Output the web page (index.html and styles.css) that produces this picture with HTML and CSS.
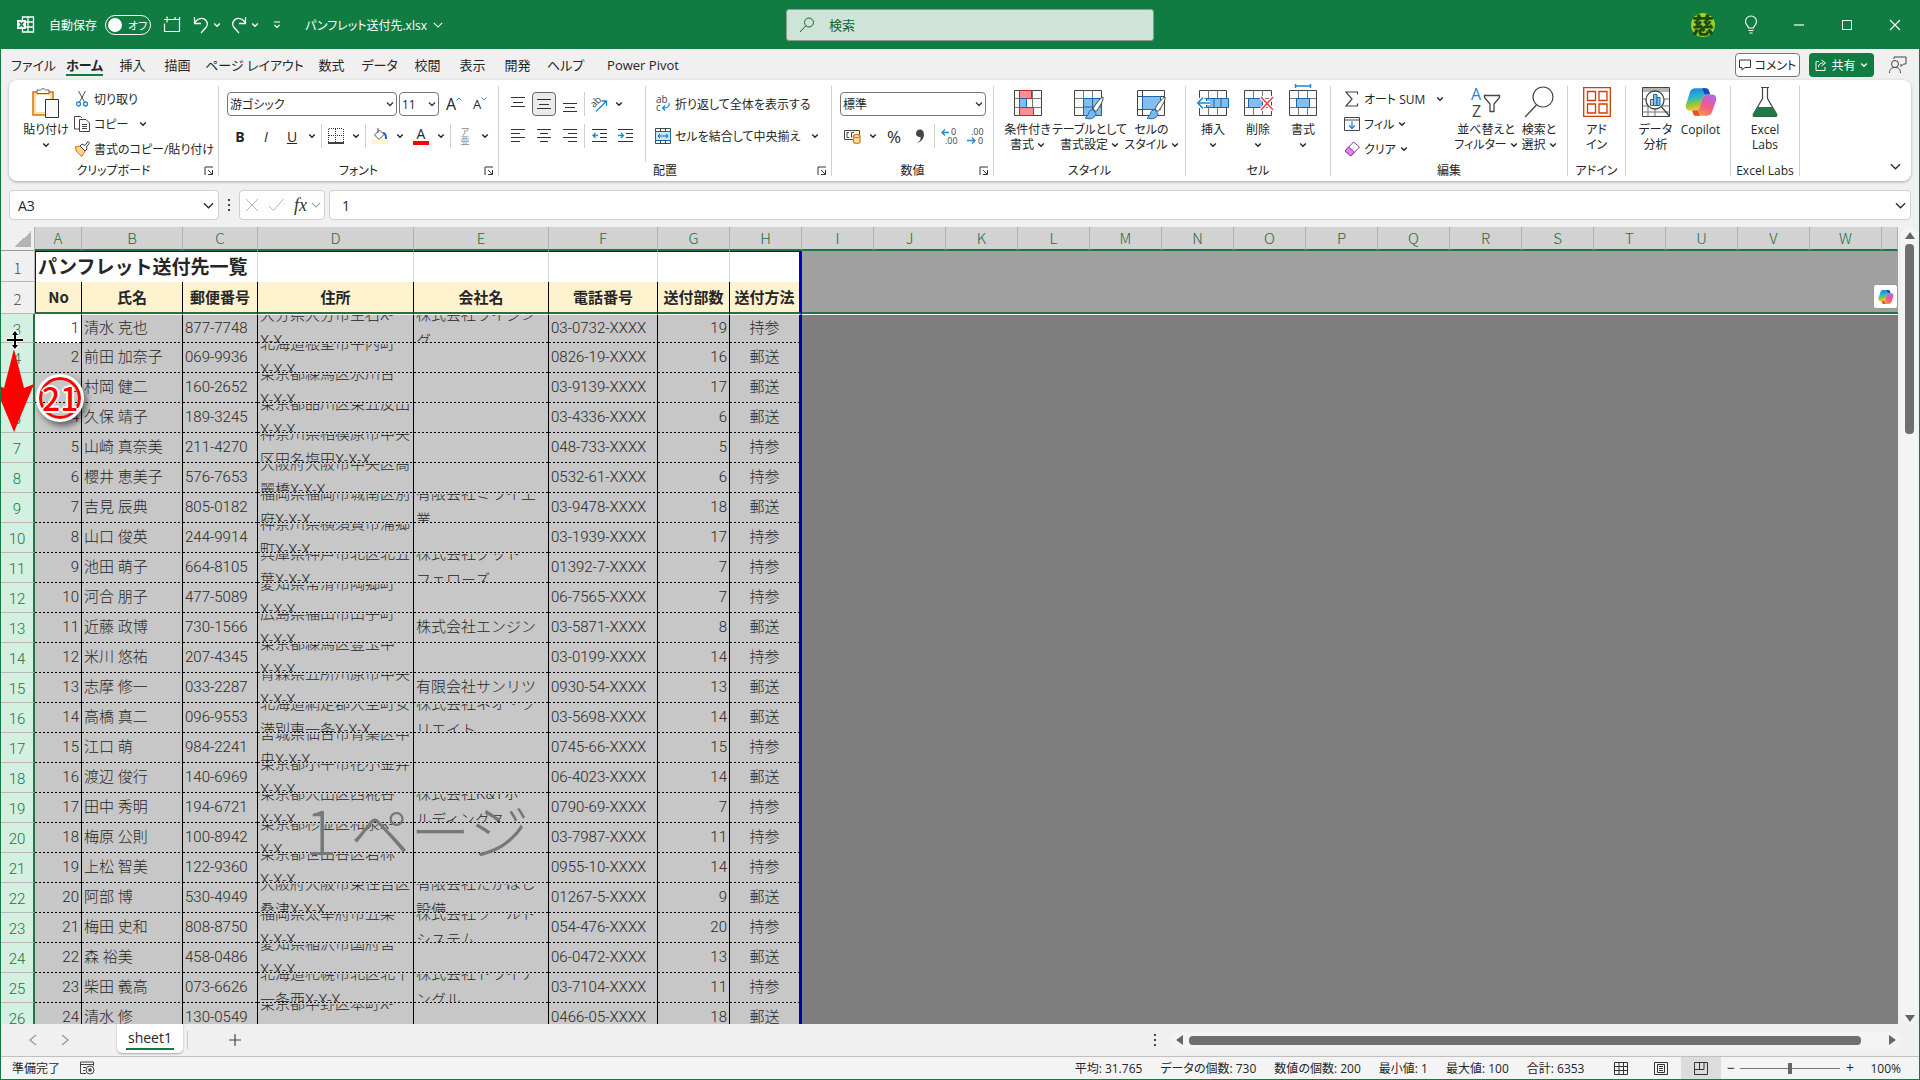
FILE: index.html
```html
<!DOCTYPE html>
<html lang="ja">
<head>
    <meta charset="UTF-8">
    <meta name="viewport" content="width=device-width, initial-scale=1.0">
    <title>パンフレット送付先.xlsx</title>
    <link rel="stylesheet" href="styles.css">
</head>
<body>
    <svg class="defs" width="0" height="0" aria-hidden="true">
        <defs>
            <linearGradient id="cpBlue" x1="0" y1="0" x2="0.2" y2="1"><stop offset="0" stop-color="#1b7fe0"/><stop offset="0.45" stop-color="#2bb5c8"/><stop offset="0.75" stop-color="#8fc93f"/><stop offset="1" stop-color="#f4c22b"/></linearGradient>
            <linearGradient id="cpPink" x1="0.8" y1="0" x2="0.3" y2="1"><stop offset="0" stop-color="#b06be8"/><stop offset="0.5" stop-color="#ee5a8c"/><stop offset="1" stop-color="#f79a3c"/></linearGradient>
        </defs>
        <symbol id="chev" viewBox="0 0 8 8"><path d="M1.2 2.5L4 5.3l2.800-2.800" fill="none" stroke="currentColor" stroke-width="1.4"/></symbol>
        <symbol id="chevBig" viewBox="0 0 12 12"><path d="M1 3.500l5 5 5-5" fill="none" stroke="currentColor" stroke-width="1.300"/></symbol>
        <symbol id="launch" viewBox="0 0 10 10"><path d="M1 9V1h8M4 4l4 4M8.500 4v4.500H4" fill="none" stroke="#333"/></symbol>
        <symbol id="copilot" viewBox="0 0 30 30">
            <path d="M10 2h9c2 0 3 1 3.600 3l.9 3h-3c-2 0-3 1-3.700 3l-3 9c-.7 2.200-2 3-4 3H5C1.500 23 0 20.500 1 17L4.500 6C5.500 3 7 2 10 2z" fill="url(#cpBlue)"/>
            <path d="M16 2h3c2 0 3 1 3.600 3l.9 3h-5z" fill="#1b48b8"/>
            <path d="M20 28h-9c-2 0-3-1-3.600-3l-.6-2h3c2 0 3.200-1 3.900-3l3-9c.7-2 1.800-3 3.800-3H25c3.500 0 5 2.500 4 6l-3.500 10c-1 3-2.500 4-5.500 4z" fill="url(#cpPink)"/>
            <path d="M14 28h-3c-2 0-3-1-3.600-3l-.6-2h5z" fill="#e8502e"/>
        </symbol>
        <symbol id="grid" viewBox="0 0 28 26"><path d="M.5.5h27v25H.5z" fill="#fafafa" stroke="#444"/><path d="M.5 8.500h27M.5 17.500h27M9.500.5v25M18.500.5v25" fill="none" stroke="#777"/></symbol>
        <symbol id="brush" viewBox="0 0 20 24"><path d="M19 1c-2 0-9 9-10 12l3 2.500C15 12 20 4 19 1z" fill="#fff" stroke="#444"/><path d="M8.500 13.500c-3 0-3.500 3-4.500 5S1 22 1 22c5 2 11 0 11-4.500z" fill="#7ab8ea" stroke="#1767ae"/></symbol>
    </svg>

    <header class="titlebar">
        <div class="title-left">
            <svg class="app" viewBox="0 0 17 17" width="17" height="17"><path d="M5.500 1h11v15h-11zM5.500 6h11M5.500 11h11M11 1v15" fill="none" stroke="#fff" stroke-width="1.300"/><rect y="4" width="9" height="9" fill="#fff"/><path d="M2.500 6l4 5M6.500 6l-4 5" stroke="#107c41" stroke-width="1.500"/></svg>
            <span class="autosave">自動保存</span>
            <button class="toggle" type="button" role="switch" aria-checked="false" aria-label="自動保存"><i></i>オフ</button>
            <button class="tb" type="button" aria-label="新規"><svg viewBox="0 0 18 18" width="18" height="18"><path d="M7 3.500h9.500v12h-15v-8M1 3.500h6M4 .500v6M12 1v2.500M16.500 1v3" fill="none" stroke="#fff" stroke-width="1.200"/></svg></button>
            <button class="tb undo" type="button" aria-label="元に戻す"><svg viewBox="0 0 16 18" width="16" height="18"><path d="M1.500 1v6.500H8M1.500 7.500C4 2 10 1 13 4.500s1 6-1 8L8 17" fill="none" stroke="#fff" stroke-width="1.300"/></svg><svg width="8" height="8"><use href="#chev"/></svg></button>
            <button class="tb redo" type="button" aria-label="やり直し"><svg viewBox="0 0 16 18" width="16" height="18"><path d="M14.500 1v6.500H8M14.500 7.500C12 2 6 1 3 4.500s-1 6 1 8L8 17" fill="none" stroke="#fff" stroke-width="1.300"/></svg><svg width="8" height="8"><use href="#chev"/></svg></button>
            <button class="tb custom" type="button" aria-label="カスタマイズ"><svg viewBox="0 0 8 8" width="8" height="8"><path d="M1 1h6M1.500 4L4 6.500 6.500 4" fill="none" stroke="#fff" stroke-width="1.200"/></svg></button>
            <button class="filename" type="button">パンフレット送付先.xlsx<svg width="10" height="10"><use href="#chevBig"/></svg></button>
        </div>
        <label class="search">
            <svg viewBox="0 0 16 16" width="16" height="16"><circle cx="10" cy="5.500" r="4.500" fill="none" stroke="#0c6434"/><path d="M6.800 8.800L1 15" stroke="#0c6434"/></svg>
            <input type="text" placeholder="検索" aria-label="検索">
        </label>
        <div class="title-right">
            <button class="win" type="button" aria-label="アカウント"><span class="avatar">慈</span></button>
            <button class="win" type="button" aria-label="ヒント"><svg viewBox="0 0 12 18" width="12" height="18"><path d="M3.500 12c0-2-3-3-3-6.500a5.500 5.500 0 0 1 11 0c0 3.500-3 4.500-3 6.500zM3.500 14.500h5M4.500 17h3" fill="none" stroke="#fff" stroke-width="1.100"/></svg></button>
            <button class="win" type="button" aria-label="最小化"><svg viewBox="0 0 10 10" width="10" height="10"><path d="M0 5h10" stroke="#fff" stroke-width="1.200"/></svg></button>
            <button class="win" type="button" aria-label="最大化"><svg viewBox="0 0 10 10" width="10" height="10"><path d="M.5.5h9v9h-9z" fill="none" stroke="#fff"/></svg></button>
            <button class="win" type="button" aria-label="閉じる"><svg viewBox="0 0 10 10" width="10" height="10"><path d="M0 0l10 10M10 0L0 10" stroke="#fff" stroke-width="1.200"/></svg></button>
        </div>
    </header>

    <nav class="tabs">
        <a class="tab w-m" href="#">ファイル</a>
        <a class="tab w-m active" href="#"><span>ホーム</span></a>
        <a class="tab" href="#">挿入</a>
        <a class="tab" href="#">描画</a>
        <a class="tab w-xl" href="#">ページ レイアウト</a>
        <a class="tab" href="#">数式</a>
        <a class="tab w-m" href="#">データ</a>
        <a class="tab" href="#">校閲</a>
        <a class="tab" href="#">表示</a>
        <a class="tab" href="#">開発</a>
        <a class="tab w-m" href="#">ヘルプ</a>
        <a class="tab w-l" href="#">Power Pivot</a>
        <div class="tabs-right">
            <button class="comment" type="button"><svg viewBox="0 0 12 12" width="12" height="12"><path d="M.5 1h11v7.500H6L3 11V8.500H.5z" fill="none" stroke="#333"/></svg>コメント</button>
            <button class="share" type="button"><svg viewBox="0 0 12 12" width="12" height="12"><path d="M4 2.500H1v9h9V8M3.500 8c0-3 2-4 5-4M6.500 1l4 3-4 3" fill="none" stroke="#fff"/></svg>共有<svg width="8" height="8"><use href="#chev"/></svg></button>
            <button class="person" type="button" aria-label="共同編集"><svg viewBox="0 0 18 18" width="18" height="18"><circle cx="6" cy="8" r="3.500" fill="none" stroke="#444"/><path d="M.5 17c0-4 2-5.500 5.500-5.500s5.500 1.500 5.500 5.500M5 3V1h12v7h-2.500L12 10.500V8" fill="none" stroke="#444"/></svg></button>
        </div>
    </nav>

    <section class="ribbon">
        <div class="group g-clip">
            <div class="group-body">
                <button class="big" type="button"><svg viewBox="0 0 28 32" width="28" height="32"><path d="M1 6h20v23H1z" fill="#fbdf9c" stroke="#d8720f" stroke-width="1.500"/><path d="M4 9h14v17H4z" fill="#fff"/><path d="M5 7.500V4h3.500a3 3 0 0 1 5 0H17v3.500z" fill="#fff" stroke="#666"/><path d="M13.500 13.500h13v18h-13z" fill="#f8f8f8" stroke="#333"/></svg><span>貼り付け</span><svg width="8" height="8"><use href="#chev"/></svg></button>
                <div class="stack">
                    <button class="row" type="button"><svg viewBox="0 0 16 16" width="16" height="16"><path d="M4.500 0l6 11M11.500 0l-6 11" stroke="#555" fill="none"/><circle cx="4.500" cy="13" r="2" fill="none" stroke="#1e88d2" stroke-width="1.300"/><circle cx="11.500" cy="13" r="2" fill="none" stroke="#1e88d2" stroke-width="1.300"/></svg>切り取り</button>
                    <button class="row" type="button"><svg viewBox="0 0 16 16" width="16" height="16"><path d="M5 13H.5V.5h6L8 2M5.500 3.500H12l3.500 3.500v8.500h-10zM8 8.500h5M8 10.500h5M8 12.500h5" fill="none" stroke="#444"/></svg>コピー<svg class="gap" width="8" height="8"><use href="#chev"/></svg></button>
                    <button class="row" type="button"><svg viewBox="0 0 16 16" width="16" height="16"><path d="M1 6l5-1 5 5-3 5.500C4 13 2 10 1 6z" fill="#fbd28a" stroke="#d8720f"/><path d="M6 5l2-2 3 1.500L14 .5l1.500 1.500-3 4L13 8l-2 2z" fill="#fff" stroke="#444"/></svg>書式のコピー/貼り付け</button>
                </div>
            </div>
            <div class="group-name">クリップボード<svg class="launch" width="10" height="10"><use href="#launch"/></svg></div>
        </div>

        <div class="group g-font">
            <div class="group-body rows">
                <div class="line">
                    <select class="combo c-font" aria-label="フォント"><option>游ゴシック</option></select>
                    <select class="combo c-size" aria-label="フォント サイズ"><option>11</option></select>
                    <button class="ic" type="button" aria-label="拡大"><span class="letter">A</span><svg class="tick" viewBox="0 0 6 4" width="6" height="4"><path d="M.5 3.500L3 1l2.500 2.500" fill="none" stroke="#1e88d2"/></svg></button>
                    <button class="ic" type="button" aria-label="縮小"><span class="letter small">A</span><svg class="tick" viewBox="0 0 6 4" width="6" height="4"><path d="M.5.5L3 3 5.500.5" fill="none" stroke="#1e88d2"/></svg></button>
                </div>
                <div class="line">
                    <button class="ic" type="button"><b>B</b></button>
                    <button class="ic" type="button"><em>I</em></button>
                    <button class="ic" type="button"><u>U</u></button>
                    <button class="dd" type="button" aria-label="下線"><svg width="8" height="8"><use href="#chev"/></svg></button>
                    <span class="sep"></span>
                    <button class="ic" type="button" aria-label="罫線"><svg viewBox="0 0 16 16" width="16" height="16"><path d="M1 .5h14M1 7.500h14M.5 1v13M7.500 1v13M15.500 1v13" stroke="#333" stroke-dasharray="1 1"/><path d="M0 15h16" stroke="#000" stroke-width="1.500"/></svg></button>
                    <button class="dd" type="button" aria-label="罫線の種類"><svg width="8" height="8"><use href="#chev"/></svg></button>
                    <span class="sep"></span>
                    <button class="ic" type="button" aria-label="塗りつぶし"><svg viewBox="0 0 16 16" width="16" height="16"><path d="M2.500 7L7.500 2l4.500 4.500L7 11.500zM6 0v5" fill="none" stroke="#555"/><path d="M11 5c3 0 3 3 3 6" fill="none" stroke="#1565a8" stroke-width="2"/><path d="M0 12h16v4H0z" fill="#fff2cf"/></svg></button>
                    <button class="dd" type="button" aria-label="塗りつぶしの色"><svg width="8" height="8"><use href="#chev"/></svg></button>
                    <button class="ic" type="button"><span class="fontcolor">A</span></button>
                    <button class="dd" type="button" aria-label="フォントの色"><svg width="8" height="8"><use href="#chev"/></svg></button>
                    <span class="sep"></span>
                    <button class="ic" type="button"><span class="ruby"><i>ア</i><i>亜</i></span></button>
                    <button class="dd" type="button" aria-label="ふりがな"><svg width="8" height="8"><use href="#chev"/></svg></button>
                </div>
            </div>
            <div class="group-name">フォント<svg class="launch" width="10" height="10"><use href="#launch"/></svg></div>
        </div>

        <div class="group g-align">
            <div class="group-body split">
                <div class="rows">
                    <div class="line">
                        <button class="ic" type="button" aria-label="上揃え"><svg viewBox="0 0 14 16" width="14" height="16"><path d="M0 1.500h14M2 6.500h10M0 10.500h14" stroke="#333"/></svg></button>
                        <button class="ic on" type="button" aria-label="上下中央揃え"><svg viewBox="0 0 14 16" width="14" height="16"><path d="M0 3.500h14M2 8.500h10M0 12.500h14" stroke="#333"/></svg></button>
                        <button class="ic" type="button" aria-label="下揃え"><svg viewBox="0 0 14 16" width="14" height="16"><path d="M0 7.500h14M2 11.500h10M0 15.500h14" stroke="#333"/></svg></button>
                        <span class="sep"></span>
                        <button class="ic" type="button" aria-label="方向"><svg viewBox="0 0 18 16" width="18" height="16"><text x="0" y="9" font-size="10" fill="#444" transform="rotate(-45 6 6)">ab</text><path d="M6 15.500L16 5.500M11.500 5H16.500V10" fill="none" stroke="#1e88d2" stroke-width="1.300"/></svg></button>
                        <button class="dd" type="button" aria-label="方向の種類"><svg width="8" height="8"><use href="#chev"/></svg></button>
                    </div>
                    <div class="line">
                        <button class="ic" type="button" aria-label="左揃え"><svg viewBox="0 0 14 14" width="14" height="14"><path d="M0 .5h14M0 4.500h9M0 8.500h14M0 12.500h9" stroke="#333"/></svg></button>
                        <button class="ic" type="button" aria-label="中央揃え"><svg viewBox="0 0 14 14" width="14" height="14"><path d="M0 .5h14M3 4.500h8M0 8.500h14M3 12.500h8" stroke="#333"/></svg></button>
                        <button class="ic" type="button" aria-label="右揃え"><svg viewBox="0 0 14 14" width="14" height="14"><path d="M0 .5h14M5 4.500h9M0 8.500h14M5 12.500h9" stroke="#333"/></svg></button>
                        <span class="sep"></span>
                        <button class="ic" type="button" aria-label="インデントを減らす"><svg viewBox="0 0 15 14" width="15" height="14"><path d="M0 .5h15M8 4.500h7M8 8.500h7M0 12.500h15" stroke="#333"/><path d="M6 6.500H1M3.500 4L1 6.500 3.500 9" fill="none" stroke="#1e88d2" stroke-width="1.300"/></svg></button>
                        <button class="ic" type="button" aria-label="インデントを増やす"><svg viewBox="0 0 15 14" width="15" height="14"><path d="M0 .5h15M8 4.500h7M8 8.500h7M0 12.500h15" stroke="#333"/><path d="M0 6.500h5M3 4l2.500 2.500L3 9" fill="none" stroke="#1e88d2" stroke-width="1.300"/></svg></button>
                    </div>
                </div>
                <div class="rows wrapcol">
                    <button class="row" type="button"><svg viewBox="0 0 16 16" width="16" height="16"><text x="1" y="7" font-size="10" fill="#444">ab</text><text x="1" y="15" font-size="10" fill="#444">c</text><path d="M14 7c1 3-1 5-6 5M10 9.500L7.500 12l2.500 2.500" fill="none" stroke="#1e88d2" stroke-width="1.300"/></svg>折り返して全体を表示する</button>
                    <button class="row" type="button"><svg viewBox="0 0 16 16" width="16" height="16"><path d="M.5.5h15v15H.5zM5.500.5v3M10.500.5v3M5.500 12.500v3M10.500 12.500v3" fill="none" stroke="#444"/><path d="M.5 3.500h15v9H.5z" fill="#c8e4f8" stroke="#1767ae"/><path d="M3 8h10M5 6L3 8l2 2M11 6l2 2-2 2" fill="none" stroke="#1767ae"/></svg>セルを結合して中央揃え<svg class="gap" width="8" height="8"><use href="#chev"/></svg></button>
                </div>
            </div>
            <div class="group-name">配置<svg class="launch" width="10" height="10"><use href="#launch"/></svg></div>
        </div>

        <div class="group g-num">
            <div class="group-body rows">
                <div class="line"><select class="combo c-num" aria-label="表示形式"><option>標準</option></select></div>
                <div class="line">
                    <button class="ic" type="button" aria-label="通貨"><svg viewBox="0 0 18 16" width="18" height="16"><path d="M.5 2.500h15v9H.5zM5 4.500H3v5h2M10 4.500H7.500v5" fill="none" stroke="#444"/><path d="M9.500 8v5.500c0 2.500 6.500 2.500 6.500 0V8" fill="#fde0b8" stroke="#e07a10" stroke-width="1.300"/><ellipse cx="12.700" cy="8" rx="3.300" ry="1.500" fill="#fff" stroke="#e07a10" stroke-width="1.300"/></svg></button>
                    <button class="dd" type="button" aria-label="通貨の種類"><svg width="8" height="8"><use href="#chev"/></svg></button>
                    <button class="ic" type="button"><span class="pct">%</span></button>
                    <button class="ic" type="button" aria-label="桁区切り"><svg viewBox="0 0 10 14" width="10" height="14"><path d="M2 14c3-2 4-3.500 3.500-6C3 8.500 1 7 1 4.500 1 2 3 .500 5 .500c2.500 0 4 2 4 5 0 4-3 7.500-7 8.500z" fill="#444"/></svg></button>
                    <span class="sep"></span>
                    <button class="ic" type="button" aria-label="小数点以下の表示桁数を増やす"><svg viewBox="0 0 17 16" width="17" height="16"><text x="10" y="7" font-size="9" fill="#444">0</text><text x="4" y="16" font-size="9" fill="#444">.00</text><path d="M8 4.500H1M4 1.500l-3 3 3 3" fill="none" stroke="#1e88d2" stroke-width="1.300"/></svg></button>
                    <button class="ic" type="button" aria-label="小数点以下の表示桁数を減らす"><svg viewBox="0 0 17 16" width="17" height="16"><text x="4" y="7" font-size="9" fill="#444">.00</text><text x="11" y="16" font-size="9" fill="#444">0</text><path d="M0 12.500h8M5 9.500l3 3-3 3" fill="none" stroke="#1e88d2" stroke-width="1.300"/></svg></button>
                </div>
            </div>
            <div class="group-name">数値<svg class="launch" width="10" height="10"><use href="#launch"/></svg></div>
        </div>

        <div class="group g-style">
            <div class="group-body bigs">
                <button class="big" type="button"><svg viewBox="0 0 32 32" width="32" height="32"><use href="#grid" x="2" y="4" width="28" height="26"/><path d="M7.500 4.500h12v8h-12zM7.500 21.500h14v8h-14z" fill="#ff8d94" stroke="#d61f1f"/><path d="M7.500 12.500h7v9h-7z" fill="#84bdee" stroke="#1767ae"/></svg><span>条件付き</span><span>書式<svg width="8" height="8"><use href="#chev"/></svg></span></button>
                <button class="big" type="button"><svg viewBox="0 0 32 32" width="32" height="32"><use href="#grid" x="0" y="4" width="28" height="26"/><path d="M9.500 12.500h18v17h-18z" fill="#84bdee" stroke="#1767ae"/><path d="M9.500 21h18M18.500 12.500v17" stroke="#1767ae"/><use href="#brush" x="9" y="10" width="22" height="24"/></svg><span>テーブルとして</span><span>書式設定<svg width="8" height="8"><use href="#chev"/></svg></span></button>
                <button class="big" type="button"><svg viewBox="0 0 32 32" width="32" height="32"><path d="M1.500 4.500h27v25h-27zM1.500 10.500h27M6.500 4.500v25M1.500 23.500h5" fill="#fafafa" stroke="#444"/><path d="M6.500 10.500h18v13h-18z" fill="#84bdee" stroke="#1767ae"/><use href="#brush" x="9" y="10" width="22" height="24"/></svg><span>セルの</span><span>スタイル<svg width="8" height="8"><use href="#chev"/></svg></span></button>
            </div>
            <div class="group-name">スタイル</div>
        </div>

        <div class="group g-cell">
            <div class="group-body bigs">
                <button class="big" type="button"><svg viewBox="0 0 32 32" width="32" height="32"><use href="#grid" x="2" y="4" width="28" height="26"/><path d="M9.500 12.500h22v9h-22zM17 12.500v9M24 12.500v9" fill="#84bdee" stroke="#1767ae"/><path d="M13 17H1M6 11l-5.500 6L6 23" fill="none" stroke="#fff" stroke-width="4"/><path d="M13 17H1M6 11.500L.800 17 6 22.500" fill="none" stroke="#1e88d2" stroke-width="1.600"/></svg><span>挿入</span><svg width="8" height="8"><use href="#chev"/></svg></button>
                <button class="big" type="button"><svg viewBox="0 0 32 32" width="32" height="32"><use href="#grid" x="2" y="4" width="28" height="26"/><path d="M6.500 12.500h14v9h-14z" fill="#84bdee" stroke="#1767ae"/><path d="M19 11l12 13M31 11L19 24" stroke="#fff" stroke-width="4"/><path d="M19 11l12 13M31 11L19 24" stroke="#e8414a" stroke-width="1.500"/></svg><span>削除</span><svg width="8" height="8"><use href="#chev"/></svg></button>
                <button class="big" type="button"><svg viewBox="0 0 32 32" width="32" height="32"><use href="#grid" x="2" y="4" width="28" height="26"/><path d="M9.500 12.500h13v9h-13z" fill="#84bdee" stroke="#1767ae"/><path d="M8.500 0h15M8.500-2v4M23.500-2v4" stroke="#1e88d2" stroke-width="1.500"/></svg><span>書式</span><svg width="8" height="8"><use href="#chev"/></svg></button>
            </div>
            <div class="group-name">セル</div>
        </div>

        <div class="group g-edit">
            <div class="group-body">
                <div class="stack">
                    <button class="row" type="button"><svg viewBox="0 0 16 16" width="16" height="16"><path d="M13.500 3.500V1H2l6 7-6 7h11.500v-2.500" fill="none" stroke="#444" stroke-width="1.200"/></svg>オート SUM<svg class="gap" width="8" height="8"><use href="#chev"/></svg></button>
                    <button class="row" type="button"><svg viewBox="0 0 16 16" width="16" height="16"><path d="M.5 1.500h15v13H.5zM.5 4h15" fill="none" stroke="#444"/><path d="M8 5.500v7M5 9.500l3 3 3-3" fill="none" stroke="#1e88d2" stroke-width="1.300"/></svg>フィル<svg width="8" height="8"><use href="#chev"/></svg></button>
                    <button class="row" type="button"><svg viewBox="0 0 16 16" width="16" height="16"><path d="M1 10L9.500 1l6 5L7 15z" fill="#fff" stroke="#9b2fa8"/><path d="M1 10l3.500-4 6 5L7 15z" fill="#d88be0" stroke="#9b2fa8"/></svg>クリア<svg width="8" height="8"><use href="#chev"/></svg></button>
                </div>
                <button class="big sort" type="button"><svg viewBox="0 0 32 32" width="32" height="32"><text x="1" y="14" font-size="16" fill="#1e88d2">A</text><text x="2" y="31" font-size="16" fill="#444">Z</text><path d="M14.500 9.500h15v2l-5.500 6.500v7.500h-4V18l-5.500-6.500z" fill="none" stroke="#444" stroke-width="1.300"/></svg><span>並べ替えと</span><span>フィルター<svg width="8" height="8"><use href="#chev"/></svg></span></button>
                <button class="big find" type="button"><svg viewBox="0 0 32 32" width="32" height="32"><circle cx="20" cy="11" r="10" fill="none" stroke="#444" stroke-width="1.200"/><path d="M13.500 19L2 31" stroke="#444" stroke-width="1.300"/></svg><span>検索と</span><span>選択<svg width="8" height="8"><use href="#chev"/></svg></span></button>
            </div>
            <div class="group-name">編集</div>
        </div>

        <div class="group g-addin">
            <div class="group-body bigs">
                <button class="big" type="button"><svg viewBox="0 0 32 32" width="32" height="32"><path d="M2.700 1.700h26.600v28.600H2.700zM6.500 5.500h8v9h-8zM18 5.500h8v9h-8zM6.500 18h8v9h-8zM18 18h8v9h-8z" fill="none" stroke="#d83b01" stroke-width="1.300"/></svg><span>アド</span><span>イン</span></button>
            </div>
            <div class="group-name">アドイン</div>
        </div>

        <div class="group g-data">
            <div class="group-body bigs">
                <button class="big" type="button"><svg viewBox="0 0 32 32" width="32" height="32"><path d="M2.500 1.500h27v29h-27z" fill="#fafafa" stroke="#444"/><path d="M3 2h26v4H3z" fill="#b5b5b5"/><path d="M2.500 13h27M2.500 20h27M2.500 26h27M8 20v10M15 20v10" stroke="#777"/><circle cx="15" cy="14" r="9" fill="#fff" stroke="#444" stroke-width="1.300"/><path d="M21.500 21l8 9" stroke="#444" stroke-width="1.300"/><path d="M10.500 13.500h3v6h-3z" fill="#ccc" stroke="#555"/><path d="M13.500 8.500h3.500v11h-3.500z" fill="#84bdee" stroke="#1767ae"/><path d="M17 11.500h3v8h-3z" fill="#84bdee" stroke="#1767ae"/></svg><span>データ</span><span>分析</span></button>
                <button class="big" type="button"><svg width="32" height="32"><use href="#copilot"/></svg><span>Copilot</span></button>
            </div>
        </div>

        <div class="group g-labs">
            <div class="group-body bigs">
                <button class="big" type="button"><svg viewBox="0 0 32 32" width="32" height="32"><path d="M12 1.500h8M13.500 1.500v11L4.500 28c-.8 1.500 0 2.500 1.500 2.500h20c1.500 0 2.300-1 1.500-2.500l-9-15.500v-11" fill="none" stroke="#444" stroke-width="1.200"/><path d="M8.500 21h15l4.500 7.500c.4 1.500-.5 2-2 2H6c-1.500 0-2.400-.5-2-2z" fill="#1f7a46"/></svg><span>Excel</span><span>Labs</span></button>
            </div>
            <div class="group-name">Excel Labs</div>
        </div>
        <button class="collapse" type="button" aria-label="リボンを折りたたむ"><svg width="11" height="11"><use href="#chevBig"/></svg></button>
    </section>

    <section class="formula">
        <div class="namebox"><input type="text" value="A3" aria-label="名前ボックス"><svg width="11" height="11"><use href="#chevBig"/></svg></div>
        <svg class="dots" viewBox="0 0 2 12" width="2" height="12"><path d="M1 0v2M1 5v2M1 10v2" stroke="#444" stroke-width="2"/></svg>
        <div class="fx">
            <svg viewBox="0 0 12 12" width="12" height="12"><path d="M0 0l12 12M12 0L0 12" stroke="#b5b5b5"/></svg>
            <svg viewBox="0 0 16 12" width="16" height="12"><path d="M1 7l4.500 4.500L15.500 0" fill="none" stroke="#b5b5b5"/></svg>
            <em>fx</em>
            <svg class="fx-chev" width="10" height="10"><use href="#chevBig"/></svg>
        </div>
        <div class="bar"><input type="text" value="1" aria-label="数式バー"><svg width="11" height="11"><use href="#chevBig"/></svg></div>
    </section>

    <main class="work">
        <div class="sheet">
            <table>
                <colgroup>
                    <col class="k-row"><col class="k-a"><col class="k-b"><col class="k-c"><col class="k-d"><col class="k-e"><col class="k-f"><col class="k-g"><col class="k-g">
                    <col class="k-g" span="15"><col>
                </colgroup>
                <thead>
                    <tr><th class="corner"></th><th>A</th><th>B</th><th>C</th><th>D</th><th>E</th><th>F</th><th>G</th><th>H</th><th>I</th><th>J</th><th>K</th><th>L</th><th>M</th><th>N</th><th>O</th><th>P</th><th>Q</th><th>R</th><th>S</th><th>T</th><th>U</th><th>V</th><th>W</th><th></th></tr>
                </thead>
                <tbody class="frozen">
                    <tr class="r1"><th>1</th><td colspan="3" class="title">パンフレット送付先一覧</td><td></td><td></td><td></td><td></td><td></td><td colspan="16" class="out"></td></tr>
                    <tr class="r2"><th>2</th><td>No</td><td>氏名</td><td>郵便番号</td><td>住所</td><td>会社名</td><td>電話番号</td><td>送付部数</td><td>送付方法</td><td colspan="16" class="out"></td></tr>
                </tbody>
                <tbody class="data">
                    <tr class="first"><th>3</th><td class="cur">1</td><td>清水 克也</td><td>877-7748</td><td><div>大分県大分市生石X-<br>X-X</div></td><td><div>株式会社ライジン<br>グ</div></td><td>03-0732-XXXX</td><td>19</td><td>持参</td><td colspan="16" class="out"></td></tr>
                    <tr><th>4</th><td>2</td><td>前田 加奈子</td><td>069-9936</td><td><div>北海道根室市平内町<br>X-X-X</div></td><td></td><td>0826-19-XXXX</td><td>16</td><td>郵送</td><td colspan="16" class="out"></td></tr>
                    <tr><th>5</th><td>3</td><td>村岡 健二</td><td>160-2652</td><td><div>東京都練馬区氷川台<br>X-X-X</div></td><td></td><td>03-9139-XXXX</td><td>17</td><td>郵送</td><td colspan="16" class="out"></td></tr>
                    <tr><th>6</th><td>4</td><td>久保 靖子</td><td>189-3245</td><td><div>東京都品川区東五反田<br>X-X-X</div></td><td></td><td>03-4336-XXXX</td><td>6</td><td>郵送</td><td colspan="16" class="out"></td></tr>
                    <tr><th>7</th><td>5</td><td>山崎 真奈美</td><td>211-4270</td><td><div>神奈川県相模原市中央<br>区田名塩田X-X-X</div></td><td></td><td>048-733-XXXX</td><td>5</td><td>持参</td><td colspan="16" class="out"></td></tr>
                    <tr><th>8</th><td>6</td><td>櫻井 恵美子</td><td>576-7653</td><td><div>大阪府大阪市中央区高<br>麗橋X-X-X</div></td><td></td><td>0532-61-XXXX</td><td>6</td><td>持参</td><td colspan="16" class="out"></td></tr>
                    <tr><th>9</th><td>7</td><td>吉見 辰典</td><td>805-0182</td><td><div>福岡県福岡市城南区別<br>府X-X-X</div></td><td><div>有限会社ミライ工<br>業</div></td><td>03-9478-XXXX</td><td>18</td><td>郵送</td><td colspan="16" class="out"></td></tr>
                    <tr><th>10</th><td>8</td><td>山口 俊英</td><td>244-9914</td><td><div>神奈川県横須賀市浦郷<br>町X-X-X</div></td><td></td><td>03-1939-XXXX</td><td>17</td><td>持参</td><td colspan="16" class="out"></td></tr>
                    <tr><th>11</th><td>9</td><td>池田 萌子</td><td>664-8105</td><td><div>兵庫県神戸市北区北五<br>葉X-X-X</div></td><td><div>株式会社グッド<br>フェローズ</div></td><td>01392-7-XXXX</td><td>7</td><td>持参</td><td colspan="16" class="out"></td></tr>
                    <tr><th>12</th><td>10</td><td>河合 朋子</td><td>477-5089</td><td><div>愛知県常滑市陶郷町<br>X-X-X</div></td><td></td><td>06-7565-XXXX</td><td>7</td><td>持参</td><td colspan="16" class="out"></td></tr>
                    <tr><th>13</th><td>11</td><td>近藤 政博</td><td>730-1566</td><td><div>広島県福山市山手町<br>X-X-X</div></td><td>株式会社エンジン</td><td>03-5871-XXXX</td><td>8</td><td>郵送</td><td colspan="16" class="out"></td></tr>
                    <tr><th>14</th><td>12</td><td>米川 悠祐</td><td>207-4345</td><td><div>東京都練馬区豊玉中<br>X-X-X</div></td><td></td><td>03-0199-XXXX</td><td>14</td><td>持参</td><td colspan="16" class="out"></td></tr>
                    <tr><th>15</th><td>13</td><td>志摩 修一</td><td>033-2287</td><td><div>青森県五所川原市中央<br>X-X-X</div></td><td>有限会社サンリツ</td><td>0930-54-XXXX</td><td>13</td><td>郵送</td><td colspan="16" class="out"></td></tr>
                    <tr><th>16</th><td>14</td><td>高橋 真二</td><td>096-9553</td><td><div>北海道網走郡大空町女<br>満別東一条X-X-X</div></td><td><div>株式会社ネオ・ク<br>リエイト</div></td><td>03-5698-XXXX</td><td>14</td><td>郵送</td><td colspan="16" class="out"></td></tr>
                    <tr><th>17</th><td>15</td><td>江口 萌</td><td>984-2241</td><td><div>宮城県仙台市青葉区中<br>央X-X-X</div></td><td></td><td>0745-66-XXXX</td><td>15</td><td>持参</td><td colspan="16" class="out"></td></tr>
                    <tr><th>18</th><td>16</td><td>渡辺 俊行</td><td>140-6969</td><td><div>東京都小平市花小金井<br>X-X-X</div></td><td></td><td>06-4023-XXXX</td><td>14</td><td>郵送</td><td colspan="16" class="out"></td></tr>
                    <tr><th>19</th><td>17</td><td>田中 秀明</td><td>194-6721</td><td><div>東京都大田区西糀谷<br>X-X-X</div></td><td><div>株式会社K&amp;Tホー<br>ルディングス</div></td><td>0790-69-XXXX</td><td>7</td><td>持参</td><td colspan="16" class="out"></td></tr>
                    <tr><th>20</th><td>18</td><td>梅原 公則</td><td>100-8942</td><td><div>東京都杉並区和泉X-<br>X-X</div></td><td></td><td>03-7987-XXXX</td><td>11</td><td>持参</td><td colspan="16" class="out"></td></tr>
                    <tr><th>21</th><td>19</td><td>上松 智美</td><td>122-9360</td><td><div>東京都世田谷区若林<br>X-X-X</div></td><td></td><td>0955-10-XXXX</td><td>14</td><td>持参</td><td colspan="16" class="out"></td></tr>
                    <tr><th>22</th><td>20</td><td>阿部 博</td><td>530-4949</td><td><div>大阪府大阪市東住吉区<br>桑津X-X-X</div></td><td><div>有限会社たかはし<br>設備</div></td><td>01267-5-XXXX</td><td>9</td><td>郵送</td><td colspan="16" class="out"></td></tr>
                    <tr><th>23</th><td>21</td><td>梅田 史和</td><td>808-8750</td><td><div>福岡県太宰府市五条<br>X-X-X</div></td><td><div>株式会社ワールド<br>システム</div></td><td>054-476-XXXX</td><td>20</td><td>持参</td><td colspan="16" class="out"></td></tr>
                    <tr><th>24</th><td>22</td><td>森 裕美</td><td>458-0486</td><td><div>愛知県稲沢市国府宮<br>X-X-X</div></td><td></td><td>06-0472-XXXX</td><td>13</td><td>郵送</td><td colspan="16" class="out"></td></tr>
                    <tr><th>25</th><td>23</td><td>柴田 義高</td><td>073-6626</td><td><div>北海道札幌市北区北十<br>一条西X-X-X</div></td><td><div>株式会社トライア<br>ングル</div></td><td>03-7104-XXXX</td><td>11</td><td>持参</td><td colspan="16" class="out"></td></tr>
                    <tr><th>26</th><td>24</td><td>清水 修</td><td>130-0549</td><td><div>東京都中野区本町X-<br>X-X</div></td><td></td><td>0466-05-XXXX</td><td>18</td><td>郵送</td><td colspan="16" class="out"></td></tr>
                </tbody>
            </table>
            <div class="page-mark">1 ページ</div>
            <button class="copilot-badge" type="button" aria-label="Copilot"><svg width="16" height="16"><use href="#copilot"/></svg></button>
            <svg class="drag-arrow" viewBox="0 0 42 84" width="42" height="84"><path d="M21 0l10 39 10-4-20 48L1 35l10 4z" fill="#f00"/></svg>
            <svg class="resize-cursor" viewBox="0 0 18 18" width="18" height="18"><path d="M1 9h16M9 1v16M6 4l3-3 3 3M6 14l3 3 3-3" fill="none" stroke="#fff" stroke-width="4"/><path d="M1 9h16M9 2v14" stroke="#000" stroke-width="2"/><path d="M9 0l3 4H6zM9 18l3-4H6z"/></svg>
            <div class="step">21</div>
        </div>
        <div class="vscroll">
            <svg viewBox="0 0 10 8" width="10" height="8"><path d="M5 0l5 7H0z" fill="#666"/></svg>
            <span class="vthumb"></span>
            <svg class="end" viewBox="0 0 10 8" width="10" height="8"><path d="M5 8L0 1h10z" fill="#666"/></svg>
        </div>
    </main>

    <div class="sheet-tabs">
        <button class="nav" type="button" aria-label="前のシート"><svg viewBox="0 0 8 10" width="8" height="10"><path d="M7 0L1 5l6 5" fill="none" stroke="#999" stroke-width="1.300"/></svg></button>
        <button class="nav" type="button" aria-label="次のシート"><svg viewBox="0 0 8 10" width="8" height="10"><path d="M1 0l6 5-6 5" fill="none" stroke="#999" stroke-width="1.300"/></svg></button>
        <button class="sheet-tab" type="button"><span>sheet1</span></button>
        <span class="tab-sep"></span>
        <button class="plus" type="button" aria-label="新しいシート"><svg viewBox="0 0 12 12" width="12" height="12"><path d="M6 0v12M0 6h12" stroke="#444" stroke-width="1.200"/></svg></button>
        <svg class="dots end" viewBox="0 0 2 12" width="2" height="12"><path d="M1 0v2M1 5v2M1 10v2" stroke="#444" stroke-width="2"/></svg>
        <div class="hscroll">
            <svg viewBox="0 0 8 10" width="8" height="10"><path d="M0 5l7-5v10z" fill="#666"/></svg>
            <span class="hthumb"></span>
            <svg viewBox="0 0 8 10" width="8" height="10"><path d="M8 5L1 0v10z" fill="#666"/></svg>
        </div>
    </div>

    <footer class="status">
        <span>準備完了</span>
        <svg class="macro" viewBox="0 0 15 14" width="15" height="14"><path d="M6 12.500H.5V1h13v4M.5 3.500h13M3 6.500h3M3 9.500h2" fill="none" stroke="#444"/><circle cx="10" cy="9" r="4" fill="none" stroke="#444"/><circle cx="10" cy="9" r="1.800" fill="#444"/></svg>
        <div class="sums">
            <span>平均: 31.765</span><span>データの個数: 730</span><span>数値の個数: 200</span><span>最小値: 1</span><span>最大値: 100</span><span>合計: 6353</span>
        </div>
        <button class="view" type="button" aria-label="標準"><svg viewBox="0 0 14 13" width="14" height="13"><path d="M.5.5h13v12H.5zM.5 4.500h13M.5 8.500h13M5 .5v12M9.500.5v12" fill="none" stroke="#333"/></svg></button>
        <button class="view" type="button" aria-label="ページ レイアウト"><svg viewBox="0 0 14 13" width="14" height="13"><path d="M.5.5h13v12H.5zM3.500 2.500h7v8h-7zM5 4.500h4M5 6.500h4M5 8.500h4" fill="none" stroke="#333"/></svg></button>
        <button class="view on" type="button" aria-label="改ページ プレビュー"><svg viewBox="0 0 14 13" width="14" height="13"><path d="M.5.5h13v12H.5zM.5 7.500h9.500V.5M5.500.5v7" fill="none" stroke="#333"/></svg></button>
        <button class="zoom-btn" type="button">−</button>
        <input class="zoom" type="range" min="0" max="100" value="50" aria-label="ズーム">
        <button class="zoom-btn" type="button">+</button>
        <span class="pc">100%</span>
    </footer>
</body>
</html>
```
FILE: styles.css
```css
* {
    box-sizing: border-box;
}

body {
    margin: 0;
    height: 100vh;
    display: flex;
    flex-direction: column;
    overflow: hidden;
    background: #f0f0f0;
    border: 1px solid #107c41;
    border-top: none;
    color: #262626;
    font-family: "Open Sans", "Noto Sans CJK JP", sans-serif;
    font-size: 12px;
    font-feature-settings: "palt";
    white-space: nowrap;
}

button, input, select {
    font: inherit;
    font-feature-settings: inherit;
    color: inherit;
    background: none;
    border: none;
    padding: 0;
    margin: 0;
}

button {
    display: flex;
    align-items: center;
    justify-content: center;
    flex: none;
}

svg {
    flex: none;
    display: block;
    overflow: visible;
}

.defs {
    position: absolute;
}

/* title bar */
.titlebar {
    display: flex;
    flex: none;
    align-items: center;
    height: 49px;
    background: #107c41;
    color: #fff;
}

.title-left {
    flex: 1 1 0;
    display: flex;
    align-items: center;
    padding-left: 16px;
    margin-right: 4px;
}

.autosave {
    width: 56px;
    margin-left: 15px;
}

.toggle {
    width: 46px;
    height: 20px;
    gap: 6px;
    justify-content: flex-start;
    padding-left: 2px;
    border: 1px solid #fff;
    border-radius: 10px;
    font-size: 11px;
}

.toggle i {
    width: 14px;
    height: 14px;
    border-radius: 50%;
    background: #fff;
}

.tb {
    gap: 4px;
    margin-left: 12px;
}

.redo {
    margin-left: 10px;
}

.custom {
    margin-left: 14px;
}

.filename {
    gap: 6px;
    margin-left: 24px;
}

.search {
    flex: none;
    display: flex;
    align-items: center;
    gap: 14px;
    width: 368px;
    height: 32px;
    padding-left: 12px;
    background: #cfe4d8;
    border: 1px solid #8a9c92;
    border-radius: 3px;
}

.search input {
    flex: 1;
    min-width: 0;
    font-size: 13px;
}

.search input::placeholder {
    color: #0c6434;
    opacity: 1;
}

.title-right {
    flex: 1 1 0;
    display: flex;
    justify-content: flex-end;
}

.win {
    width: 48px;
    height: 48px;
}

.avatar {
    width: 24px;
    height: 24px;
    border-radius: 50%;
    background: #9bd128;
    color: #1d4a12;
    font-size: 22px;
    font-weight: 900;
    line-height: 22px;
}

/* tabs */
.tabs {
    display: flex;
    flex: none;
    align-items: center;
    height: 31px;
    padding: 0 8px 0 7px;
    font-size: 13px;
}

.tab {
    width: 45px;
    height: 28px;
    display: flex;
    align-items: center;
    justify-content: center;
    color: inherit;
    text-decoration: none;
}

.w-m {
    width: 51px;
}

.w-l {
    width: 104px;
}

.w-xl {
    width: 109px;
}

.tab.active span {
    font-weight: 700;
    padding-top: 2px;
    border-bottom: 2px solid #107c41;
}

.tabs-right {
    margin-left: auto;
    display: flex;
    align-items: center;
    gap: 9px;
    padding-right: 4px;
}

.comment, .share {
    width: 65px;
    height: 24px;
    gap: 4px;
    border-radius: 4px;
    font-size: 12px;
}

.comment {
    background: #fff;
    border: 1px solid #777;
}

.share {
    background: #107c41;
    color: #fff;
}

.person {
    margin-left: 6px;
}

/* ribbon */
.ribbon {
    display: flex;
    flex: none;
    height: 101px;
    margin: 0 8px;
    padding: 4px 0 1px;
    background: #fff;
    border-radius: 8px;
    box-shadow: 0 1px 3px rgba(0, 0, 0, 0.3);
}

.group {
    flex: none;
    display: flex;
    flex-direction: column;
    height: 90px;
    margin-top: 2px;
    border-right: 1px solid #d0d0d0;
}

.g-clip { width: 210px; }
.g-font { width: 280px; }
.g-align { width: 333px; }
.g-num { width: 162px; }
.g-style { width: 192px; }
.g-cell { width: 145px; }
.g-edit { width: 237px; }
.g-addin { width: 58px; }
.g-data { width: 105px; }
.g-labs { width: 69px; }

.group-body {
    flex: 1;
    display: flex;
    min-height: 0;
}

.group-name {
    position: relative;
    height: 14px;
    line-height: 18px;
    text-align: center;
}

.launch {
    position: absolute;
    right: 4px;
    top: 4px;
}

.big {
    flex-direction: column;
    justify-content: flex-start;
    width: 45px;
    line-height: 15px;
}

.big > svg:first-child {
    margin-bottom: 4px;
}

.big > svg:last-child {
    margin-top: 4px;
}

.big span {
    display: flex;
    align-items: center;
    gap: 3px;
}

.g-clip .big {
    width: 56px;
    margin-left: 9px;
}

.bigs {
    justify-content: center;
}

.g-style .big {
    width: 62px;
}

.stack {
    display: flex;
    flex-direction: column;
}

.row {
    height: 26px;
    gap: 4px;
    justify-content: flex-start;
}

.stack .row {
    height: 25px;
}

.row .gap {
    margin-left: 7px;
}

.rows {
    display: flex;
    flex-direction: column;
    gap: 4px;
    padding-top: 4px;
}

.g-font .rows, .g-num .rows {
    padding-left: 8px;
}

.line {
    display: flex;
    align-items: center;
    height: 28px;
}

.ic {
    width: 26px;
    height: 24px;
    font-size: 14px;
}

.ic.on {
    width: 24px;
    margin: 0 1px;
    background: #ebebeb;
    border: 1px solid #666;
    border-radius: 4px;
}

.dd {
    width: 14px;
    height: 24px;
    margin-right: 1px;
}

.sep {
    width: 1px;
    height: 24px;
    margin: 0 1px;
    background: #d0d0d0;
}

.combo {
    height: 24px;
    padding-left: 2px;
    border: 1px solid #777;
    border-radius: 4px;
    appearance: none;
    background: #fff url("data:image/svg+xml,%3Csvg xmlns='http://www.w3.org/2000/svg' width='8' height='8'%3E%3Cpath d='M1 2.500l3 3 3-3' fill='none' stroke='%23333' stroke-width='1.300'/%3E%3C/svg%3E") no-repeat right 2px center;
}

.c-font {
    width: 170px;
}

.c-size {
    width: 40px;
    margin: 0 2px;
}

.c-num {
    width: 146px;
}

.letter {
    font-size: 16px;
}

.letter.small {
    font-size: 13px;
}

.tick {
    margin-bottom: 10px;
}

.fontcolor {
    width: 16px;
    line-height: 14px;
    border-bottom: 4px solid #f00;
}

.ruby {
    display: flex;
    flex-direction: column;
    color: #888;
    font-size: 9px;
    line-height: 9px;
}

.ruby i {
    font-style: normal;
}

.pct {
    font-size: 17px;
}

.split {
    padding-left: 6px;
}

.wrapcol {
    margin-left: auto;
    width: 186px;
    padding-left: 9px;
    border-left: 1px solid #d0d0d0;
}

.wrapcol .row {
    height: 28px;
}

.g-edit .stack {
    width: 114px;
    padding-left: 13px;
}

.sort {
    width: 66px;
    margin-left: 8px;
}

.g-edit .find {
    width: 40px;
}

.collapse {
    margin: auto 10px 8px auto;
}

/* formula bar */
.formula {
    display: flex;
    flex: none;
    align-items: center;
    height: 30px;
    margin: 9px 8px 7px;
}

.namebox, .fx, .bar {
    display: flex;
    align-items: center;
    height: 30px;
    background: #fff;
    border: 1px solid #d0d0d0;
    border-radius: 4px;
    padding: 0 4px 0 8px;
}

.namebox {
    width: 210px;
}

.namebox input, .bar input {
    flex: 1;
    min-width: 0;
    font-size: 14px;
}

.formula .dots {
    margin: 0 9px;
}

.fx {
    width: 86px;
    padding: 0 2px 0 6px;
    gap: 10px;
    color: #999;
}

.fx em {
    color: #333;
    font-family: "Liberation Serif", serif;
    font-size: 18px;
}

.fx-chev {
    margin-left: -6px;
}

.bar {
    flex: 1;
    margin-left: 4px;
    padding-left: 12px;
}

/* sheet */
.work {
    flex: 1;
    min-height: 0;
    display: flex;
}

.sheet {
    position: relative;
    flex: 1;
    min-width: 0;
    overflow: hidden;
    background: #7f7f7f;
    font-feature-settings: normal;
    font-family: "Noto Sans CJK JP", sans-serif;
    font-size: 15px;
    font-weight: 300;
}

table {
    width: 100%;
    table-layout: fixed;
    border-collapse: separate;
    border-spacing: 0;
}

.k-row { width: 34px; }
.k-a { width: 47px; }
.k-b { width: 101px; }
.k-c { width: 75px; }
.k-d { width: 156px; }
.k-e { width: 135px; }
.k-f { width: 109px; }
.k-g { width: 72px; }

th, td {
    padding: 0 2px;
    font-weight: 300;
    line-height: 20px;
}

thead th {
    height: 24px;
    background: #d2d2d2;
    border-right: 1px solid #b0b0b0;
    border-bottom: 2px solid #217346;
    color: #1e6b41;
}

thead .corner {
    background: linear-gradient(135deg, transparent 50%, #b4b4b4 50%) no-repeat 14px 4px / 16px 16px #f0f0f0;
    border-bottom: 1px solid #999;
}

tbody th {
    background: #f0f0f0;
    border-bottom: 1px solid #b8b8b8;
    border-right: 1px solid #b8b8b8;
    color: #444;
    padding-top: 3px;
}

.r1 td {
    height: 31px;
    padding-bottom: 3px;
    background: #fff;
    border-top: 1px solid #0000c8;
    border-right: 1px solid #d8d8d8;
}

.r1 .title {
    padding-left: 2px;
    font-size: 19px;
    font-weight: 700;
}

.r1 td:nth-child(2), .r2 td:nth-child(2) {
    border-left: 1px solid #0000c8;
}

.r2 td {
    height: 32px;
    padding: 0;
    background: #fff2cf;
    border-right: 1px solid #000;
    border-bottom: 2px solid #217346;
    font-weight: 700;
    text-align: center;
}

.frozen td:nth-last-child(2) {
    border-right: 3px solid #0000c8;
}

.frozen .out {
    background: #a0a0a0;
    border-top: none;
    border-right: none;
}

.data td, .data th {
    font-family: Roboto, "Noto Sans CJK JP", sans-serif;
}

.data th {
    background: #d3f0e0;
    border-right: 2px solid #217346;
    color: #217346;
}

.data td {
    height: 30px;
    padding-bottom: 3px;
    border-right: 1px solid #000;
    background: repeating-linear-gradient(90deg, #000 0 2px, transparent 2px 4px) no-repeat bottom / 100% 1px #c7c7c7;
}

.data .first td {
    height: 29px;
    border-top: 1px solid #fff;
}

.data td:nth-child(2), .data td:nth-child(8) {
    text-align: right;
}

.data td:nth-child(9) {
    text-align: center;
    border-right: 3px solid #0000a0;
}

.data .cur {
    background-color: #fff;
}

.data .out {
    background: #7f7f7f;
    border-right: none;
}

/* two wrapped lines, cut off by the row height */
.data td div {
    display: flex;
    align-items: center;
    height: 28px;
    margin-bottom: -3px;
    padding-bottom: 2px;
    line-height: 26px;
    overflow: hidden;
}

.page-mark {
    position: absolute;
    left: 304px;
    top: 562px;
    color: #777;
    font-size: 60px;
    line-height: 80px;
}

.copilot-badge {
    position: absolute;
    right: 0;
    top: 57px;
    width: 25px;
    height: 25px;
    background: #fff;
    border: 1px solid #999;
    border-radius: 3px;
}

.drag-arrow {
    position: absolute;
    left: -8px;
    top: 122px;
}

.resize-cursor {
    position: absolute;
    left: 5px;
    top: 104px;
}

.step {
    position: absolute;
    left: 38px;
    top: 150px;
    width: 42px;
    height: 42px;
    border: 3px solid #f00;
    border-radius: 50%;
    outline: 3px solid #fff;
    box-shadow: 3px 4px 6px 3px rgba(0, 0, 0, 0.5);
    color: #f00;
    font-size: 32px;
    font-weight: 500;
    line-height: 34px;
    text-align: center;
    text-shadow: 2px 0 #fff, -2px 0 #fff, 0 2px #fff, 0 -2px #fff;
}

.vscroll {
    display: flex;
    flex-direction: column;
    align-items: center;
    width: 17px;
    margin: 0 1px 0 3px;
    padding: 5px 0 2px;
    background: #f4f4f4;
    border-radius: 8px;
}

.vthumb {
    width: 9px;
    height: 24%;
    margin-top: 4px;
    border-radius: 4px;
    background: #6f6f6f;
}

.end {
    margin-top: auto;
}

/* sheet tabs */
.sheet-tabs {
    display: flex;
    flex: none;
    align-items: center;
    height: 32px;
    padding: 0 18px 0 16px;
}

.nav {
    width: 32px;
    height: 28px;
}

.sheet-tab {
    width: 66px;
    height: 29px;
    margin: 0 4px 3px 36px;
    background: #fff;
    border-radius: 0 0 5px 5px;
    box-shadow: 0 1px 2px rgba(0, 0, 0, 0.3);
    font-size: 14px;
}

.sheet-tab span {
    padding: 0 2px;
    line-height: 21px;
    border-bottom: 2px solid #107c41;
}

.tab-sep {
    width: 1px;
    height: 18px;
    margin-right: 41px;
    background: #c8c8c8;
}

.sheet-tabs .dots {
    margin: 0 15px 0 auto;
}

.hscroll {
    display: flex;
    align-items: center;
    width: 40%;
    max-width: 730px;
    height: 17px;
    padding: 0 5px;
    gap: 5px;
    background: #f4f4f4;
    border-radius: 8px;
}

.hthumb {
    flex: 1;
    height: 9px;
    margin-right: 22px;
    border-radius: 4px;
    background: #6f6f6f;
}

/* status bar */
.status {
    display: flex;
    flex: none;
    align-items: center;
    height: 23px;
    padding: 0 18px 0 11px;
    border-top: 1px solid #c0c0c0;
    background: #f4f4f4;
}

.macro {
    margin-left: 20px;
}

.sums {
    display: flex;
    gap: 18px;
    margin: 0 17px 0 auto;
}

.view {
    width: 40px;
    height: 22px;
}

.view.on {
    background: #dcdcdc;
}

.zoom-btn {
    width: 19px;
    font-size: 14px;
    line-height: 20px;
}

.zoom {
    width: 100px;
    height: 16px;
    appearance: none;
    background: linear-gradient(#777, #777) no-repeat center / 100% 1px;
}

.zoom::-webkit-slider-thumb {
    appearance: none;
    width: 4px;
    height: 11px;
    background: #666;
}

.pc {
    margin-left: 11px;
}
```
